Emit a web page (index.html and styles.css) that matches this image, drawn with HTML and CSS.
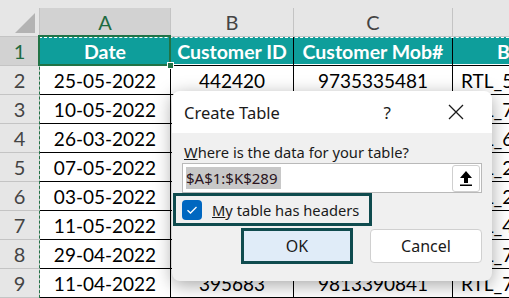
FILE: index.html
```html
<!DOCTYPE html>
<html lang="en">
<head>
    <meta charset="UTF-8">
    <title>Create Table</title>
    <link rel="stylesheet" href="styles.css">
</head>
<body>
    <div class="sheet">
        <div class="grid">
            <!-- top strip -->
            <div class="strip"></div>

            <!-- column headers -->
            <div class="corner"><span class="tri"></span></div>
            <div class="colhead sel">A</div>
            <div class="colhead">B</div>
            <div class="colhead">C</div>
            <div class="colhead last">D</div>

            <div class="rowhead sel">1</div>
            <div class="cell th">Date</div>
            <div class="cell th">Customer ID</div>
            <div class="cell th">Customer Mob#</div>
            <div class="cell th thd">Bill No.</div>

            <div class="rowhead">2</div>
            <div class="cell c">25-05-2022</div>
            <div class="cell c">442420</div>
            <div class="cell c">9735335481</div>
            <div class="cell l">RTL_58423</div>

            <div class="rowhead">3</div>
            <div class="cell c">10-05-2022</div>
            <div class="cell c">518730</div>
            <div class="cell c">9812254470</div>
            <div class="cell l">RTL_74519</div>

            <div class="rowhead">4</div>
            <div class="cell c">26-03-2022</div>
            <div class="cell c">367215</div>
            <div class="cell c">9711480236</div>
            <div class="cell l">RTL_63307</div>

            <div class="rowhead">5</div>
            <div class="cell c">07-05-2022</div>
            <div class="cell c">402981</div>
            <div class="cell c">9870013562</div>
            <div class="cell l">RTL_29184</div>

            <div class="rowhead">6</div>
            <div class="cell c">03-05-2022</div>
            <div class="cell c">455106</div>
            <div class="cell c">9765429018</div>
            <div class="cell l">RTL_25560</div>

            <div class="rowhead">7</div>
            <div class="cell c">11-05-2022</div>
            <div class="cell c">389412</div>
            <div class="cell c">9902316745</div>
            <div class="cell l">RTL_41277</div>

            <div class="rowhead">8</div>
            <div class="cell c">29-04-2022</div>
            <div class="cell c">471258</div>
            <div class="cell c">9823347701</div>
            <div class="cell l">RTL_70913</div>

            <div class="rowhead">9</div>
            <div class="cell c">11-04-2022</div>
            <div class="cell c">395683</div>
            <div class="cell c">9813390841</div>
            <div class="cell l">RTL_72648</div>
        </div>

        <!-- copy range + active cell -->
        <div class="ants"></div>
        <div class="active"><span class="handle"></span></div>

        <!-- Create Table dialog -->
        <div class="dialog">
            <div class="dlg-title">
                <span class="dlg-name">Create Table</span>
                <span class="dlg-help">?</span>
                <svg class="dlg-close" width="16" height="16" viewBox="0 0 16 16">
                    <path d="M1 1 L15 15 M15 1 L1 15" stroke="#1a1a1a" stroke-width="1.3" fill="none"/>
                </svg>
            </div>
            <div class="dlg-body">
                <div class="prompt"><u>W</u>here is the data for your table?</div>
                <div class="range">
                    <span class="range-text">$A$1:$K$289</span>
                    <span class="collapse">
                        <svg width="14" height="16" viewBox="0 0 14 16">
                            <path d="M7 1 L13 8 L9 8 L9 13 L5 13 L5 8 L1 8 Z" fill="#000"/>
                            <rect x="1" y="14.5" width="12" height="1.5" fill="#000"/>
                        </svg>
                    </span>
                </div>
                <div class="check-row">
                    <span class="box">
                        <svg width="12" height="10" viewBox="0 0 12 10">
                            <path d="M1.5 5.2 L4.5 8 L10.5 2" stroke="#fff" stroke-width="1.3" fill="none"/>
                        </svg>
                    </span>
                    <span class="check-label"><u>M</u>y table has headers</span>
                </div>
                <div class="buttons">
                    <button class="btn ok">OK</button>
                    <button class="btn">Cancel</button>
                </div>
            </div>
        </div>
    </div>
</body>
</html>
```

FILE: styles.css
```css
body {
    margin: 0;
    width: 509px;
    height: 298px;
    overflow: hidden;
    background: #fff;
}

.sheet {
    position: relative;
    width: 509px;
    height: 298px;
    overflow: hidden;
    font-family: Lato, "Liberation Sans", sans-serif;
}

.grid {
    display: grid;
    grid-template-columns: 40px 131px 123px 159px 170px;
    grid-template-rows: 8px 29px repeat(9, 29px);
}

.strip {
    grid-column: 1 / -1;
    background: #e6e6e6;
}

.corner {
    position: relative;
    background: #e6e6e6;
    border-right: 1px solid #c4c4c4;
    border-bottom: 1px solid #c4c4c4;
}

.tri {
    position: absolute;
    right: 4px;
    bottom: 3px;
    width: 0;
    height: 0;
    border-left: 20px solid transparent;
    border-bottom: 20px solid #b3b3b3;
}

.colhead {
    background: #e6e6e6;
    border-right: 1px solid #c4c4c4;
    border-bottom: 1px solid #c4c4c4;
    display: flex;
    align-items: center;
    justify-content: center;
    font-size: 20px;
    color: #444;
}

.colhead.sel {
    background: #d2d2d2;
    color: #1e6b41;
    border-bottom: 2px solid #217346;
}

.rowhead {
    background: #e6e6e6;
    border-right: 1px solid #c4c4c4;
    border-bottom: 1px solid #c4c4c4;
    display: flex;
    align-items: center;
    justify-content: center;
    font-size: 20px;
    color: #444;
}

.rowhead.sel {
    background: #d2d2d2;
    color: #1e6b41;
}

.cell {
    border-right: 1px solid #000;
    border-bottom: 1px solid #000;
    display: flex;
    align-items: center;
    font-size: 19px;
    color: #000;
    white-space: nowrap;
    overflow: hidden;
}

.c {
    justify-content: center;
}

.l {
    padding-left: 8px;
}

.th {
    background: #0e9e9b;
    color: #fff;
    font-weight: bold;
    font-size: 19.5px;
    justify-content: center;
    border-bottom: 1px solid #000;
    box-shadow: inset 0 -1px 0 #fff;
}

.thd {
    justify-content: flex-start;
    padding-left: 44px;
}

.ants {
    position: absolute;
    left: 39px;
    top: 37px;
    right: -10px;
    bottom: -10px;
    border-top: 1px dashed #fff;
    border-left: 1px dashed #217346;
}

.active {
    position: absolute;
    left: 38px;
    top: 35px;
    width: 129px;
    height: 27px;
    border: 2px solid #217346;
}

.handle {
    position: absolute;
    right: -5px;
    bottom: -5px;
    width: 5px;
    height: 5px;
    background: #217346;
    border: 1px solid #fff;
}

/* dialog */
.dialog {
    position: absolute;
    left: 172px;
    top: 91px;
    width: 320px;
    height: 190px;
    border-radius: 8px;
    overflow: hidden;
    background: #f0f0f0;
    box-shadow: 0 4px 18px rgba(0, 0, 0, 0.35);
    font-family: "Noto Sans", "Open Sans", sans-serif;
    color: #1a1a1a;
    display: flex;
    flex-direction: column;
}

.dlg-title {
    height: 42px;
    background: #fff;
    display: flex;
    align-items: center;
    padding: 0 28px 0 12px;
    font-size: 16.5px;
}

.dlg-name {
    flex: 1;
}

.dlg-help {
    margin-right: 57px;
    font-size: 17px;
}

.dlg-body {
    flex: 1;
    padding: 8px 10px 0 10px;
    display: flex;
    flex-direction: column;
}

.prompt {
    font-size: 14.7px;
    padding-left: 2px;
    height: 22px;
    line-height: 22px;
}

.range {
    margin-top: 0;
    height: 28px;
    background: #fff;
    border: 1px solid #b9b9b9;
    display: flex;
    align-items: center;
    padding: 0 1px 0 3px;
}

.range-text {
    flex: 1;
    font-size: 15px;
    background: linear-gradient(#c8c8c8, #c8c8c8) no-repeat;
    background-size: 95px 100%;
    color: #2a1420;
    line-height: 22px;
}

.collapse {
    width: 26px;
    height: 25px;
    background: #fff;
    border: 1px solid #cfcfcf;
    border-radius: 3px;
    display: flex;
    align-items: center;
    justify-content: center;
}

.check-row {
    margin: 0 0 0 -9px;
    width: 187px;
    height: 27px;
    border: 3px solid #0f4b4e;
    display: flex;
    align-items: center;
    padding-left: 6px;
}

.box {
    width: 20px;
    height: 20px;
    border-radius: 4px;
    background: #0067c0;
    display: flex;
    align-items: center;
    justify-content: center;
}

.check-label {
    margin-left: 10px;
    font-size: 14.7px;
}

.buttons {
    display: flex;
    gap: 17px;
    margin-top: 3px;
    padding-left: 59px;
}

.btn {
    width: 112px;
    height: 34px;
    background: #fff;
    border: 1px solid #d0d0d0;
    border-radius: 4px;
    font-family: "Noto Sans", "Open Sans", sans-serif;
    font-size: 16px;
    color: #1a1a1a;
    padding: 0;
}

.btn.ok {
    height: 36px;
    margin-top: -1px;
    background: #e0ecf8;
    border: 3px solid #0f4b4e;
    border-radius: 0;
}
```
